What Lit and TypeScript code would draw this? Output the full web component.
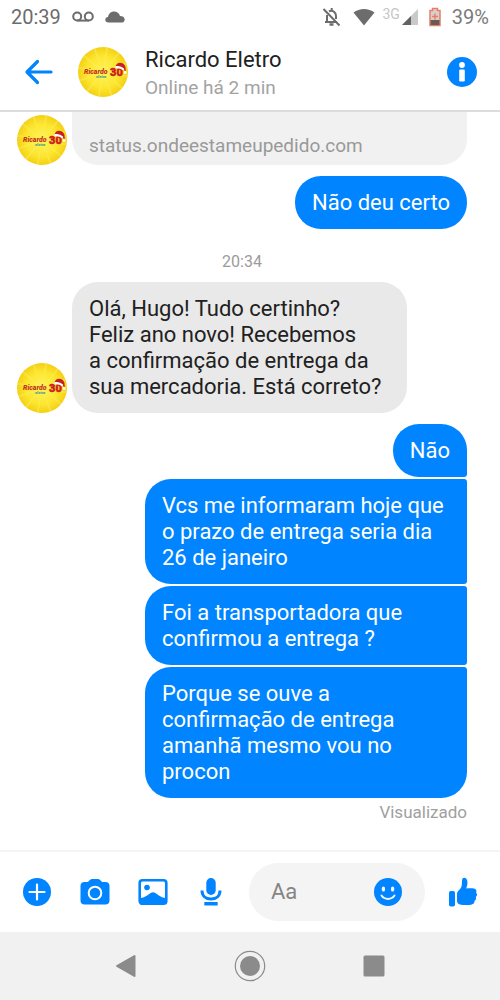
import { LitElement, html, css, svg } from "lit";
import { customElement, property } from "lit/decorators.js";

@customElement("shop-avatar")
class ShopAvatar extends LitElement {
  static styles = css`
    :host { display: block; flex: none; width: 50px; height: 50px; }
    svg { display: block; width: 100%; height: 100%; }
    .brand { font: italic 900 7px Roboto, sans-serif; fill: #c3341c; }
    .sub { font: italic 900 4px Roboto, sans-serif; fill: #3f9e86; }
    .years { font: 900 11px Roboto, sans-serif; fill: #d6231f; stroke: #c31c1c; stroke-width: 0.5px; }
  `;

  render() {
    const rays = Array.from({ length: 12 }, (_, i) => svg`
      <path d="M25 25 L23.8 0 L26.2 0 Z" fill="#fff27a" opacity="0.35" transform="rotate(${i * 30 + 10} 25 25)"></path>`);
    return html`
      <svg viewBox="0 0 50 50" role="img" aria-label="Ricardo Eletro">
        <defs>
          <radialGradient id="sun">
            <stop offset="0" stop-color="#fff35c"></stop>
            <stop offset="0.65" stop-color="#fce62e"></stop>
            <stop offset="1" stop-color="#f4d014"></stop>
          </radialGradient>
          <clipPath id="disc"><circle cx="25" cy="25" r="25"></circle></clipPath>
        </defs>
        <g clip-path="url(#disc)">
          <rect width="50" height="50" fill="url(#sun)"></rect>
          ${rays}
        </g>
        <text class="brand" x="6" y="27">Ricardo</text>
        <text class="sub" x="18" y="31">eletro</text>
        <text class="years" x="32" y="29">30</text>
        <path d="M37.5 20 C38 15.5 42 14.8 45 16.5 C47.5 18 48 21 47.6 25 L45.5 22 Z" fill="#c81f22"></path>
        <path d="M37.3 19.3 C40 18.3 44 19.5 46.3 21.8 L45.2 23.6 C43 21.6 40 20.8 37.5 21.4 Z" fill="#fff"></path>
        <circle cx="47.2" cy="25.5" r="1.4" fill="#fff"></circle>
      </svg>`;
  }
}

interface Message {
  from: "me" | "shop";
  text: string;
}

@customElement("app-root")
class AppRoot extends LitElement {
  @property({ attribute: false }) reply: Message = {
    from: "shop",
    text: "Olá, Hugo! Tudo certinho? Feliz ano novo! Recebemos a\u00a0confirmação de entrega da sua mercadoria. Está correto?",
  };

  @property({ attribute: false }) sent: Message[] = [
    { from: "me", text: "Não" },
    { from: "me", text: "Vcs me informaram hoje que o prazo de entrega seria dia 26 de janeiro" },
    { from: "me", text: "Foi a transportadora que confirmou a entrega ?" },
    { from: "me", text: "Porque se ouve a confirmação de entrega amanhã mesmo vou no procon" },
  ];

  static styles = css`
    :host {
      display: flex;
      flex-direction: column;
      min-height: 100vh;
      background: #fff;
      color: #212121;
      font-family: Roboto, "Noto Sans", sans-serif;
      font-size: 22px;
      line-height: 26px;
    }
    * { box-sizing: border-box; }
    svg { display: block; flex: none; }
    button {
      display: block;
      flex: none;
      padding: 0;
      border: 0;
      background: none;
      color: #0084ff;
      cursor: pointer;
    }
    .status {
      display: flex;
      align-items: center;
      justify-content: space-between;
      height: 34px;
      padding: 0 11px;
      color: #6c6c6c;
      font-size: 20px;
    }
    .status-side { display: flex; align-items: center; }
    .status-left { gap: 11px; }
    .battery { margin: 0 11px; }
    .percent { color: #7b7b7b; }
    .wifi { margin: 0 7px 0 12px; }
    .network { color: #c6c6c6; font-size: 14px; line-height: 14px; padding-bottom: 6px; }
    .signal { margin-left: 2px; }
    .header {
      display: flex;
      align-items: center;
      height: 78px;
      padding: 0 23px 0 24px;
      border-bottom: 2px solid #dcdcdc;
    }
    .header shop-avatar { margin: 0 17px 0 24px; }
    .who { flex: 1; min-width: 0; padding-top: 4px; }
    .name { margin: 0; font-size: 22px; font-weight: 400; line-height: 28px; }
    .presence { margin: 0; color: #a3a3a3; font-size: 19px; line-height: 28px; }
    .thread {
      display: flex;
      flex: 1;
      flex-direction: column;
      padding: 0 33px 28px 17px;
    }
    .row { display: flex; align-items: flex-end; gap: 5px; }
    .card {
      flex: 1;
      padding: 22px 17px 7px;
      border-radius: 0 0 26px 26px;
      background: #f1f1f1;
      font-size: 19px;
      line-height: 24px;
    }
    .card a { color: #999; text-decoration: none; }
    .bubble {
      margin: 0;
      padding: 14px 17px 13px;
      border-radius: 26px;
      overflow-wrap: break-word;
    }
    .theirs { max-width: 335px; background: #e9e9e9; }
    .mine { align-self: flex-end; max-width: 322px; background: #0084ff; color: #fff; }
    .single { margin-top: 11px; }
    .time {
      margin: 23px 0 10px;
      color: #9b9b9b;
      font-size: 16px;
      line-height: 20px;
      text-align: center;
    }
    .group { display: flex; flex-direction: column; gap: 2px; margin-top: 11px; }
    .group .mine { border-radius: 26px 3px 3px 26px; }
    .group .mine:first-child { border-top-right-radius: 26px; }
    .group .mine:last-child { border-bottom-right-radius: 26px; }
    .seen {
      margin: 4px 0 0;
      color: #a0a0a0;
      font-size: 17px;
      line-height: 20px;
      text-align: right;
    }
    .composer {
      display: flex;
      align-items: center;
      gap: 22px;
      height: 82px;
      padding: 0 21px;
      border-top: 2px solid #f4f4f4;
    }
    .tools { display: flex; gap: 26px; }
    .field {
      display: flex;
      flex: 1;
      align-items: center;
      min-width: 0;
      height: 58px;
      padding: 0 22px;
      border-radius: 29px;
      background: #f4f4f4;
    }
    .field input {
      flex: 1;
      min-width: 0;
      padding: 0;
      border: 0;
      outline: 0;
      background: none;
      color: #212121;
      font: inherit;
    }
    .field input::placeholder { color: #858585; opacity: 1; }
    .nav {
      display: flex;
      align-items: center;
      justify-content: space-between;
      height: 68px;
      padding: 0 110px;
      background: #f1f1f1;
    }
  `;

  private statusBar() {
    return html`
      <div class="status">
        <div class="status-side status-left">
          <span>20:39</span>
          <svg width="22" height="12" viewBox="0 0 22 12" fill="none" stroke="currentColor" stroke-width="2">
            <circle cx="5.2" cy="5.5" r="4"></circle><circle cx="16.8" cy="5.5" r="4"></circle><path d="M5.2 9.6H16.8"></path>
          </svg>
          <svg width="20" height="12" viewBox="0 0 20 12" fill="currentColor">
            <path d="M3.500 11.500C1.500 11.500.3 10.500.3 8.800.3 7.200 1.400 6.200 3 6 3.600 2.800 6 .6 9 .6 12 .6 14.200 2.300 15 5 17.500 5 19.700 6.200 19.700 8.400 19.700 10.500 18.300 11.500 16.500 11.500Z"></path>
          </svg>
        </div>
        <div class="status-side">
          <svg width="19" height="20" viewBox="0 0 19 20" fill="none" stroke="currentColor" stroke-width="2">
            <path d="M5 8V14.500M3 15H14.500M7 4.200C10.500 2.800 14 5 14 9V12M9.700 1V3.500"></path>
            <path d="M7.500 17.500H11.500" stroke-width="2.500"></path><path d="M1.500 2 17.500 18.500"></path>
          </svg>
          <svg class="wifi" width="22" height="18" viewBox="0 0 22 18" fill="currentColor">
            <path d="M.5 4.500C6.500-.3 15.500-.3 21.500 4.500L11 17.500Z"></path>
          </svg>
          <span class="network">3G</span>
          <svg class="signal" width="16" height="16" viewBox="0 0 16 16">
            <path d="M0 16 16 0V16Z" fill="#c9c9c9"></path><path d="M0 16 9 7V16Z" fill="#626262"></path>
          </svg>
          <svg class="battery" width="12" height="20" viewBox="0 0 12 20">
            <path d="M3.500 1.500H8.500V3.500H11V18.500H1V3.500H3.500Z" fill="#d5d0cb" stroke="#e97e68" stroke-width="1.500"></path>
            <path d="M1.500 13H10.500V18H1.500Z" fill="#6a5a52"></path>
            <path d="M6 6.500V12.500M3 9.500H9" stroke="#e97e68" stroke-width="1.500"></path>
          </svg>
          <span class="percent">39%</span>
        </div>
      </div>`;
  }

  private header() {
    return html`
      <header class="header">
        <button aria-label="Voltar">
          <svg width="30" height="26" viewBox="0 0 30 26" fill="none" stroke="currentColor" stroke-width="3.200" stroke-linecap="round" stroke-linejoin="round">
            <path d="M13.500 2.500 3 13 13.500 23.500M3.500 13H27"></path>
          </svg>
        </button>
        <shop-avatar></shop-avatar>
        <div class="who">
          <h1 class="name">Ricardo Eletro</h1>
          <p class="presence">Online há 2 min</p>
        </div>
        <button aria-label="Informações">
          <svg width="30" height="30" viewBox="0 0 30 30">
            <circle cx="15" cy="15" r="15" fill="currentColor"></circle>
            <circle cx="15" cy="8" r="2.900" fill="#fff"></circle>
            <rect x="12.200" y="12.500" width="5.600" height="12" rx="1.200" fill="#fff"></rect>
          </svg>
        </button>
      </header>`;
  }

  private composer() {
    return html`
      <form class="composer" @submit=${(e: Event) => e.preventDefault()}>
        <div class="tools">
          <button type="button" aria-label="Mais opções">
            <svg width="32" height="32" viewBox="0 0 32 32">
              <circle cx="16" cy="16" r="14" fill="currentColor"></circle>
              <path d="M16 8.500V23.500M8.500 16H23.500" stroke="#fff" stroke-width="2.200" stroke-linecap="round"></path>
            </svg>
          </button>
          <button type="button" aria-label="Câmera">
            <svg width="32" height="32" viewBox="0 0 32 32">
              <path d="M5.500 6H8.500C10 6 10.500 3 13 3H19C21.500 3 22 6 23.500 6H26.500C29 6 30.500 7.500 30.500 10V24.500C30.500 27 29 28.500 26.500 28.500H5.500C3 28.500 1.500 27 1.500 24.500V10C1.500 7.500 3 6 5.500 6Z" fill="currentColor"></path>
              <circle cx="16" cy="17" r="6.300" fill="none" stroke="#fff" stroke-width="2"></circle>
            </svg>
          </button>
          <button type="button" aria-label="Galeria">
            <svg width="32" height="32" viewBox="0 0 32 32">
              <rect x="2.700" y="4.200" width="26.600" height="23.600" rx="2.800" fill="#fff" stroke="currentColor" stroke-width="2.600"></rect>
              <circle cx="10" cy="11.500" r="2.800" fill="currentColor"></circle>
              <path d="M3 22C6 22 8 20.800 10.500 19.200 13 17.500 14.500 16.200 16 16.200 17.500 16.200 19 17.500 21.500 19.200 24 20.800 26 22 29 22V27.500H3Z" fill="currentColor"></path>
            </svg>
          </button>
          <button type="button" aria-label="Gravar áudio">
            <svg width="32" height="32" viewBox="0 0 32 32">
              <rect x="11.300" y="2" width="9.400" height="17" rx="4.700" fill="currentColor"></rect>
              <path d="M7 14.500C7 20 11 23 16 23S25 20 25 14.500" fill="none" stroke="currentColor" stroke-width="3"></path>
              <rect x="9.300" y="26" width="13.400" height="3.500" rx="0.500" fill="currentColor"></rect>
            </svg>
          </button>
        </div>
        <label class="field">
          <input type="text" placeholder="Aa" aria-label="Mensagem" />
          <button type="button" aria-label="Emoji">
            <svg width="30" height="30" viewBox="0 0 30 30">
              <circle cx="15" cy="15" r="14" fill="currentColor"></circle>
              <rect x="8.800" y="9.500" width="3.200" height="5" rx="1.600" fill="#f4f4f4"></rect>
              <rect x="18" y="9.500" width="3.200" height="5" rx="1.600" fill="#f4f4f4"></rect>
              <path d="M8.500 18.500C11.500 23 18.500 23 21.500 18.500" fill="none" stroke="#f4f4f4" stroke-width="2" stroke-linecap="round"></path>
            </svg>
          </button>
        </label>
        <button type="button" aria-label="Curtir">
          <svg width="32" height="32" viewBox="0 0 32 32" fill="currentColor">
            <rect x="2" y="15" width="6" height="15.500" rx="1.800"></rect>
            <path d="M10 18C10 15.500 12 14.500 13.500 12.500 15 10.500 14.800 8.500 15 5 15.100 2.800 15.800 1.700 17.200 1.700 19.800 1.700 20.800 5 20.400 8 20.200 9.700 19.700 11 19.200 12.400 21.500 12.200 25.500 12 27.700 12.800 29.700 13.600 29.700 15.600 29.100 16.700 30.500 18 30.300 19.800 28.800 20.900 29.500 22.500 28.900 24 27.500 24.700 27.700 26.500 26.800 27.800 25.300 28.200 22.500 29.200 17 29.200 14 28.700 11.300 28.200 10 27.300 10 24.500Z"></path>
          </svg>
        </button>
      </form>`;
  }

  render() {
    return html`
      ${this.statusBar()}
      ${this.header()}
      <main class="thread">
        <div class="row">
          <shop-avatar></shop-avatar>
          <div class="card"><a href="#">status.ondeestameupedido.com</a></div>
        </div>
        <p class="bubble mine single">Não deu certo</p>
        <p class="time">20:34</p>
        <div class="row">
          <shop-avatar></shop-avatar>
          <p class="bubble theirs">${this.reply.text}</p>
        </div>
        <div class="group">
          ${this.sent.map((m) => html`<p class="bubble mine">${m.text}</p>`)}
        </div>
        <p class="seen">Visualizado</p>
      </main>
      ${this.composer()}
      <nav class="nav">
        <button aria-label="Voltar">
          <svg width="32" height="32" viewBox="0 0 32 32">
            <path d="M7 16 24.500 6V26Z" fill="#8b8b8b" stroke="#8b8b8b" stroke-width="2" stroke-linejoin="round"></path>
          </svg>
        </button>
        <button aria-label="Início">
          <svg width="32" height="32" viewBox="0 0 32 32">
            <circle cx="16" cy="16" r="14.700" fill="none" stroke="#8b8b8b" stroke-width="1.200"></circle>
            <circle cx="16" cy="16" r="10" fill="#8b8b8b"></circle>
          </svg>
        </button>
        <button aria-label="Recentes">
          <svg width="32" height="32" viewBox="0 0 32 32">
            <rect x="5.500" y="5.500" width="21" height="21" rx="1.500" fill="#8b8b8b"></rect>
          </svg>
        </button>
      </nav>`;
  }
}
